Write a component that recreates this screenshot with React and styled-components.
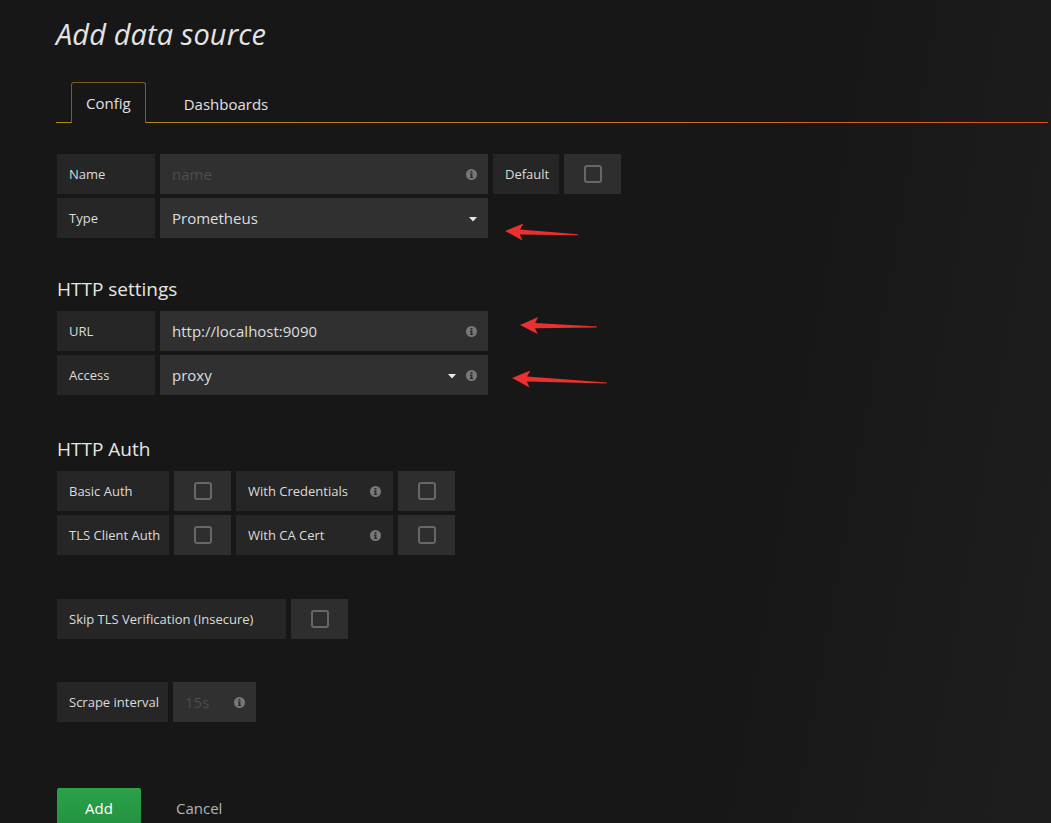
import React from "react";
import styled, { createGlobalStyle } from "styled-components";

const Global = createGlobalStyle`
  html, body { margin: 0; padding: 0; }
  body {
    background: #181717;
    font-family: "Open Sans", "Noto Sans", sans-serif;
    color: #d8d9da;
    overflow: hidden;
  }
`;

const Page = styled.div`
  position: relative;
  width: 1051px;
  height: 823px;
  overflow: hidden;
  box-sizing: border-box;
  padding: 16px 0 0 56px;
  background: linear-gradient(100deg, #181717 0%, #181717 70%, #1e1e1e 100%);
`;

const Title = styled.h1`
  margin: 0;
  font-size: 29px;
  font-weight: 400;
  font-style: italic;
  line-height: 36px;
  color: #e4e4e4;
  letter-spacing: 0.1px;
`;

const TabBar = styled.div`
  display: flex;
  align-items: flex-end;
  margin: 30px 3px 0 0;
  padding-left: 15px;
  height: 41px;
  background: linear-gradient(90deg, #b08a12 0%, #c8781a 50%, #e2501a 100%) bottom left / 100% 1px no-repeat;
`;

const Tab = styled.div`
  box-sizing: border-box;
  height: ${(p) => (p.$active ? "41px" : "40px")};
  padding: 0 ${(p) => (p.$active ? "14px" : "19px")};
  margin-left: ${(p) => (p.$active ? "0" : "18px")};
  display: flex;
  align-items: center;
  font-size: 15px;
  color: #e0e0e0;
  border: 1px solid ${(p) => (p.$active ? "#7d5e1e" : "transparent")};
  border-bottom: none;
  border-radius: 3px 3px 0 0;
  background: ${(p) => (p.$active ? "#181717" : "transparent")};
`;

const Form = styled.div`
  padding-left: 1px;
  margin-top: 31px;
  display: flex;
  flex-direction: column;
`;

const Row = styled.div`
  display: flex;
  gap: 5px;
  height: 40px;
  margin-top: ${(p) => p.$mt || 0}px;
  margin-bottom: 4px;
`;

const Label = styled.div`
  box-sizing: border-box;
  width: ${(p) => p.$w}px;
  flex: none;
  display: flex;
  align-items: center;
  justify-content: space-between;
  padding: 0 12px 0 12px;
  background: #262626;
  font-size: 13px;
  color: #dcdcdc;
  white-space: nowrap;
  overflow: hidden;
`;

const Input = styled.div`
  box-sizing: border-box;
  width: ${(p) => p.$w}px;
  flex: none;
  display: flex;
  align-items: center;
  gap: 10px;
  padding: 0 11px 0 12px;
  background: #303030;
  font-size: 15px;
  color: ${(p) => (p.$placeholder ? "#4d4d4d" : "#dedede")};
`;

const Value = styled.span`
  flex: 1;
  white-space: nowrap;
`;

const CheckCell = styled.div`
  box-sizing: border-box;
  width: ${(p) => p.$w || 57}px;
  flex: none;
  display: flex;
  align-items: center;
  justify-content: center;
  background: #2e2e2e;
`;

const Box = styled.span`
  box-sizing: border-box;
  width: 18px;
  height: 18px;
  border: 2px solid #676767;
  border-radius: 3px;
`;

const Section = styled.h2`
  margin: ${(p) => p.$mt}px 0 ${(p) => p.$mb}px 0;
  font-size: 19px;
  font-weight: 400;
  line-height: 24px;
  color: #e6e6e6;
`;

const Actions = styled.div`
  display: flex;
  align-items: center;
  margin-top: 62px;
  gap: 35px;
`;

const AddButton = styled.button`
  width: 84px;
  height: 42px;
  border: none;
  border-radius: 2px;
  background: linear-gradient(180deg, #2aa24a 0%, #23903f 100%);
  color: #fff;
  font-family: inherit;
  font-size: 15px;
  padding: 0 0 2px;
`;

const CancelText = styled.span`
  font-size: 15px;
  color: #b4b4b4;
  padding-bottom: 2px;
`;

const Annot = styled.svg`
  position: absolute;
  overflow: visible;
`;

const Info = () => (
  <svg width="11" height="11" viewBox="0 0 12 12" style={{ flex: "none" }}>
    <circle cx="6" cy="6" r="6" fill="#787878" />
    <rect x="5" y="2.2" width="2" height="1.8" fill="#2a2a2a" />
    <path d="M4.3 5 H7 V8.6 H7.8 V9.8 H4.3 V8.6 H5.1 V6.2 H4.3 Z" fill="#2a2a2a" />
  </svg>
);

const Caret = () => (
  <svg width="8" height="5" viewBox="0 0 8 5" style={{ flex: "none", marginTop: 3 }}>
    <path d="M0 0 H8 L4 4.5 Z" fill="#e8e8e8" />
  </svg>
);

const Arrow = ({ x, y, len, angle }) => (
  <Annot
    width={len}
    height="18"
    viewBox={`0 0 ${len} 18`}
    style={{ left: x, top: y - 9, transform: `rotate(${angle}deg)`, transformOrigin: "0 9px" }}
  >
    <path
      d={`M0 9 L18 0.5 L15 6.6 L${len} 8.5 L${len} 9.5 L15 11.8 L18 17.5 Z`}
      fill="#ec2f2f"
    />
  </Annot>
);

export default function App() {
  return (
    <>
      <Global />
      <Page>
        <Title>Add data source</Title>
        <TabBar>
          <Tab $active>Config</Tab>
          <Tab>Dashboards</Tab>
        </TabBar>

        <Form>
          <Row>
            <Label $w={98}>Name</Label>
            <Input $w={328} $placeholder>
              <Value>name</Value>
              <Info />
            </Input>
            <Label $w={66}>Default</Label>
            <CheckCell $w={57}><Box /></CheckCell>
          </Row>
          <Row>
            <Label $w={98}>Type</Label>
            <Input $w={328}>
              <Value>Prometheus</Value>
              <Caret />
            </Input>
          </Row>

          <Section $mt={35} $mb={10}>HTTP settings</Section>
          <Row>
            <Label $w={98}>URL</Label>
            <Input $w={328}>
              <Value>http://localhost:9090</Value>
              <Info />
            </Input>
          </Row>
          <Row>
            <Label $w={98}>Access</Label>
            <Input $w={328}>
              <Value>proxy</Value>
              <Caret />
              <Info />
            </Input>
          </Row>

          <Section $mt={38} $mb={10}>HTTP Auth</Section>
          <Row>
            <Label $w={112}>Basic Auth</Label>
            <CheckCell><Box /></CheckCell>
            <Label $w={157}>With Credentials <Info /></Label>
            <CheckCell><Box /></CheckCell>
          </Row>
          <Row>
            <Label $w={112}>TLS Client Auth</Label>
            <CheckCell><Box /></CheckCell>
            <Label $w={157}>With CA Cert <Info /></Label>
            <CheckCell><Box /></CheckCell>
          </Row>

          <Row $mt={40}>
            <Label $w={229}>Skip TLS Verification (Insecure)</Label>
            <CheckCell><Box /></CheckCell>
          </Row>

          <Row $mt={39}>
            <Label $w={111}>Scrape interval</Label>
            <Input $w={83} $placeholder>
              <Value>15s</Value>
              <Info />
            </Input>
          </Row>

          <Actions>
            <AddButton>Add</AddButton>
            <CancelText>Cancel</CancelText>
          </Actions>
        </Form>

        <Arrow x={505} y={231} len={73} angle={3} />
        <Arrow x={520} y={325} len={77} angle={1.5} />
        <Arrow x={512} y={378} len={95} angle={3} />
      </Page>
    </>
  );
}
